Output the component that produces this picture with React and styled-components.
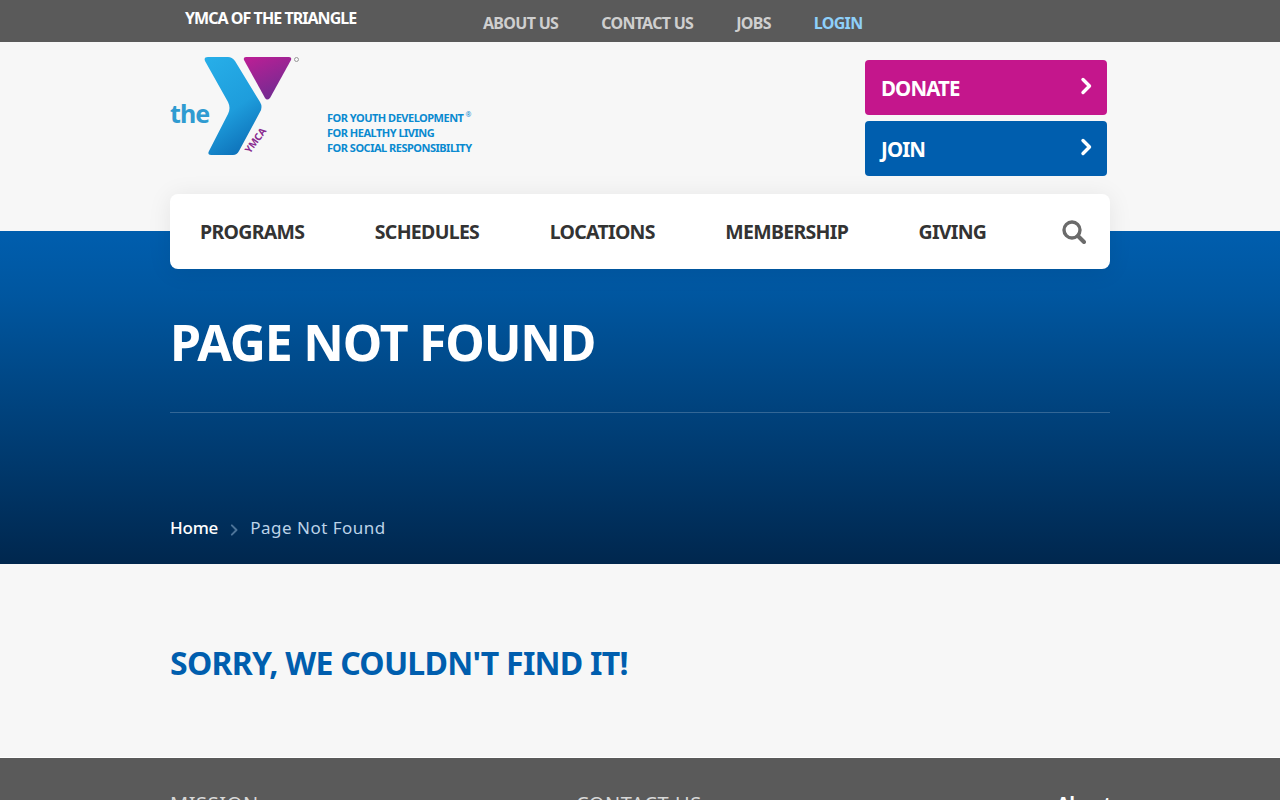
import styled, { createGlobalStyle } from 'styled-components';

const GlobalStyle = createGlobalStyle`
  html, body {
    margin: 0;
    background: #f7f7f7;
    font-family: "Noto Sans", "Open Sans", sans-serif;
    height: 800px;
    overflow: hidden;
  }
  * { box-sizing: border-box; }
  a { text-decoration: none; color: inherit; }
`;

const Wrap = styled.div`
  width: 940px;
  margin: 0 auto;
`;

const TopBar = styled.div`
  height: 42px;
  background: #5a5a5a;
`;

const TopInner = styled(Wrap)`
  display: flex;
  align-items: center;
  height: 42px;
  font-size: 16px;
  font-weight: 700;
`;

const SiteName = styled.div`
  width: 313px;
  padding-left: 15px;
  color: #fff;
  margin-top: -7px;
  letter-spacing: -0.95px;
`;

const TopLinks = styled.nav`
  display: flex;
  gap: 43px;
  margin-top: 3px;
  letter-spacing: -0.7px;
`;

const TopLink = styled.a`
  color: ${({ $active }) => ($active ? '#8ed0fa' : '#cfcfcf')};
`;

const Header = styled(Wrap)`
  height: 189px;
  padding-top: 13px;
  position: relative;
  z-index: 2;
`;

const HeaderTop = styled.div`
  display: flex;
  justify-content: space-between;
  height: 139px;
  padding-right: 3px;
`;

const Logo = styled.div`
  display: flex;
  align-items: flex-start;
  gap: 27px;
`;

const Tagline = styled.div`
  margin-top: 55px;
  color: #0a8ad0;
  font-size: 11px;
  font-weight: 700;
  line-height: 15px;
  letter-spacing: -0.5px;
  white-space: nowrap;

  sup {
    font-size: 7px;
    font-weight: 400;
    line-height: 0;
    margin-left: 2px;
  }
`;

const Actions = styled.div`
  display: flex;
  flex-direction: column;
  gap: 6px;
  padding-top: 5px;
`;

const ActionButton = styled.a`
  display: flex;
  align-items: center;
  justify-content: space-between;
  width: 242px;
  height: 55px;
  padding: 0 14px 0 16px;
  border-radius: 4px;
  background: ${({ $color }) => $color};
  color: #fff;
  font-size: 20.5px;
  font-weight: 700;
  letter-spacing: -0.9px;

  svg {
    margin-top: -4px;
  }
`;

const NavCard = styled.nav`
  display: flex;
  align-items: center;
  justify-content: space-between;
  height: 75px;
  padding: 0 24px 0 30px;
  background: #fff;
  border-radius: 8px;
  box-shadow: 0 2px 24px rgba(0, 0, 0, 0.08);
`;

const NavItems = styled.div`
  display: flex;
  gap: 70.5px;
`;

const NavItem = styled.a`
  color: #333;
  font-size: 19.5px;
  font-weight: 700;
  letter-spacing: -0.7px;
`;

const Hero = styled.section`
  height: 333px;
  background: linear-gradient(to bottom, #005eae 0%, #00569f 20%, #00274e 100%);
`;

const HeroInner = styled(Wrap)`
  padding-top: 79px;
`;

const HeroTitle = styled.h1`
  margin: 0;
  height: 103px;
  color: #fff;
  font-size: 50px;
  font-weight: 700;
  line-height: 64px;
  letter-spacing: -1.2px;
  border-bottom: 1px solid rgba(255, 255, 255, 0.2);
`;

const Breadcrumbs = styled.div`
  display: flex;
  align-items: center;
  gap: 11px;
  margin-top: 103px;
  font-size: 17px;
  line-height: 24px;
`;

const Crumb = styled.a`
  color: ${({ $current }) => ($current ? '#bcd3e8' : '#fff')};
  font-weight: ${({ $current }) => ($current ? 400 : 500)};
  letter-spacing: ${({ $current }) => ($current ? '0.5px' : '-0.2px')};
`;

const CrumbArrow = styled.span`
  display: flex;
  margin-top: 3px;
`;

const Content = styled.main`
  height: 193px;
  background: #f7f7f7;
`;

const Sorry = styled.h2`
  margin: 0;
  padding-top: 77px;
  color: #005eae;
  font-size: 32px;
  font-weight: 700;
  line-height: 44px;
  letter-spacing: -0.75px;
`;

const Footer = styled.footer`
  height: 200px;
  background: #5a5a5a;
  border-top: 1px solid #fff;
`;

const FooterInner = styled(Wrap)`
  display: flex;
  padding-top: 34px;
  line-height: 24px;
`;

const FooterHeading = styled.div`
  flex: 0 0 ${({ $width }) => $width}px;
  color: #d8d8d8;
  font-size: 20px;
  font-weight: 400;
  letter-spacing: 0.6px;
`;

const FooterLink = styled.a`
  flex: none;
  margin-top: -1px;
  color: #fff;
  font-size: 18px;
  font-weight: 700;
`;

function Chevron({ color = '#fff', size = 14, width = 3.4 }) {
  return (
    <svg width={size} height={size + 4} viewBox="0 0 14 18" fill="none">
      <path d="M4 2.500 10.500 9 4 15.500" stroke={color} strokeWidth={width} strokeLinecap="round" strokeLinejoin="round" />
    </svg>
  );
}

function YLogo() {
  return (
    <svg width="130" height="102" viewBox="0 0 130 102">
      <defs>
        <linearGradient id="arm" x1="0.1" y1="0" x2="0.5" y2="1">
          <stop offset="0" stopColor="#27aee8" />
          <stop offset="0.6" stopColor="#1e9ddc" />
          <stop offset="1" stopColor="#0f75bc" />
        </linearGradient>
        <linearGradient id="tri" x1="0.2" y1="0" x2="0.7" y2="1">
          <stop offset="0" stopColor="#b81f95" />
          <stop offset="1" stopColor="#6e2c91" />
        </linearGradient>
      </defs>
      <path
        d="M38 2h20q4 0 7 4l25 41q3 5 0 10L69 96q-2 4-6 4H41q-4 0-2-4l19-37q3-6 0-12L35 6q-1.500-4 3-4z"
        fill="url(#arm)"
      />
      <path d="M76 2h43q3 0 2 3l-21 38q-3 3-5 0L74 5q-1-3 2-3z" fill="url(#tri)" />
      <text x="0" y="68" fontFamily="Noto Sans, sans-serif" fontSize="25" fontWeight="700" fill="#2f9bd1" letterSpacing="-0.9">
        the
      </text>
      <text
        transform="translate(80 99) rotate(-54)"
        fontFamily="Noto Sans, sans-serif"
        fontSize="10"
        fontWeight="700"
        fill="#8a2a8f"
        letterSpacing="-0.2"
      >
        YMCA
      </text>
      <circle cx="126.500" cy="4.500" r="2" fill="none" stroke="#8f8f8f" strokeWidth="0.9" />
    </svg>
  );
}

function SearchIcon() {
  return (
    <svg width="24" height="24" viewBox="0 0 24 24" fill="none">
      <circle cx="10" cy="10" r="8" stroke="#6b6b6b" strokeWidth="3.4" />
      <path d="M16 16l6 6" stroke="#6b6b6b" strokeWidth="4" strokeLinecap="round" />
    </svg>
  );
}

export default function App() {
  return (
    <>
      <GlobalStyle />
      <TopBar>
        <TopInner>
          <SiteName>YMCA OF THE TRIANGLE</SiteName>
          <TopLinks>
            <TopLink>ABOUT US</TopLink>
            <TopLink>CONTACT US</TopLink>
            <TopLink>JOBS</TopLink>
            <TopLink $active>LOGIN</TopLink>
          </TopLinks>
        </TopInner>
      </TopBar>
      <Header>
        <HeaderTop>
          <Logo>
            <YLogo />
            <Tagline>
              FOR YOUTH DEVELOPMENT<sup>®</sup>
              <br />
              FOR HEALTHY LIVING
              <br />
              FOR SOCIAL RESPONSIBILITY
            </Tagline>
          </Logo>
          <Actions>
            <ActionButton $color="#c4168c">
              DONATE
              <Chevron />
            </ActionButton>
            <ActionButton $color="#005eae">
              JOIN
              <Chevron />
            </ActionButton>
          </Actions>
        </HeaderTop>
        <NavCard>
          <NavItems>
            <NavItem>PROGRAMS</NavItem>
            <NavItem>SCHEDULES</NavItem>
            <NavItem>LOCATIONS</NavItem>
            <NavItem>MEMBERSHIP</NavItem>
            <NavItem>GIVING</NavItem>
          </NavItems>
          <SearchIcon />
        </NavCard>
      </Header>
      <Hero>
        <HeroInner>
          <HeroTitle>PAGE NOT FOUND</HeroTitle>
          <Breadcrumbs>
            <Crumb>Home</Crumb>
            <CrumbArrow>
              <Chevron color="#4d7499" size={10} width={2.8} />
            </CrumbArrow>
            <Crumb $current>Page Not Found</Crumb>
          </Breadcrumbs>
        </HeroInner>
      </Hero>
      <Content>
        <Wrap>
          <Sorry>SORRY, WE COULDN'T FIND IT!</Sorry>
        </Wrap>
      </Content>
      <Footer>
        <FooterInner>
          <FooterHeading $width={406}>MISSION</FooterHeading>
          <FooterHeading $width={481}>CONTACT US</FooterHeading>
          <FooterLink>About</FooterLink>
        </FooterInner>
      </Footer>
    </>
  );
}
